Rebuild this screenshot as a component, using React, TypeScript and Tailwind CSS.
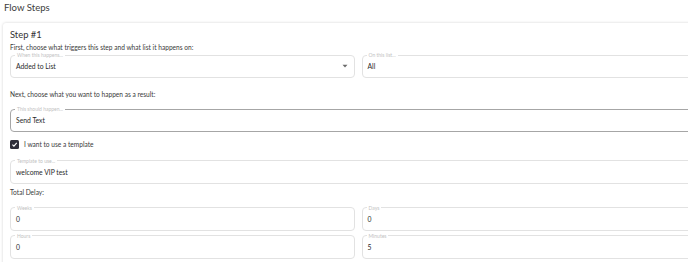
import React from "react";

interface FieldProps {
    label: string
    value: string
    select?: boolean
    active?: boolean
}

function Field(props: FieldProps) {
    return (
        <fieldset
            className={
                "flex-1 rounded-[4px] border px-[5px] pb-[3px] " +
                (props.active ? "border-[#a6a6a6]" : "border-[#e2e2e2]")
            }
        >
            <legend className="ml-[-1px] px-[2px] text-[5px] leading-[6px] text-[#c2c2c2]">
                {props.label}
            </legend>
            <div className="flex h-[16px] items-center justify-between text-[6.8px] text-[#2a2a2a]">
                <span>{props.value}</span>
                {props.select && (
                    <svg width="6" height="4" viewBox="0 0 6 4" className="mr-[1px]">
                        <path d="M0.5 0.8 L3 3.4 L5.5 0.8 Z" fill="#6b6b6b" />
                    </svg>
                )}
            </div>
        </fieldset>
    )
}

export default function App() {
    return (
        <div
            className="h-[262px] w-[688px] overflow-hidden bg-white"
            style={{ fontFamily: "Lato, 'Open Sans', sans-serif" }}
        >
            <h1 className="px-[4px] pt-[1px] text-[9.6px] leading-[13px] text-[#404040]">Flow Steps</h1>
            <div className="ml-[3px] mt-[9px] w-[720px] rounded-[3px] bg-white px-[7px] pt-[6px] shadow-[0_0_3px_rgba(0,0,0,0.18)]">
                <h2 className="text-[9.4px] leading-[12px] text-[#333]">Step #1</h2>
                <p className="mt-[2px] text-[6.6px] leading-[8px] text-[#3a3a3a]">
                    First, choose what triggers this step and what list it happens on:
                </p>
                <div className="mt-[1px] flex gap-[7px] pr-[10px]">
                    <Field label="When this happens..." value="Added to List" select />
                    <Field label="On this list..." value="All" />
                </div>
                <p className="mt-[12px] text-[6.6px] leading-[8px] text-[#3a3a3a]">
                    Next, choose what you want to happen as a result:
                </p>
                <div className="mt-[8px] flex pr-[10px]">
                    <Field label="This should happen..." value="Send Text" active />
                </div>
                <label className="mt-[8px] flex items-center gap-[5px] text-[6.6px] text-[#3a3a3a]">
                    <span className="flex h-[9px] w-[9px] items-center justify-center rounded-[1.5px] bg-[#2f2f3a]">
                        <svg width="7" height="7" viewBox="0 0 10 10">
                            <path d="M2 5.2 L4.2 7.3 L8.2 2.8" stroke="#fff" strokeWidth="1.6" fill="none" />
                        </svg>
                    </span>
                    I want to use a template
                </label>
                <div className="mt-[8px] flex pr-[10px]">
                    <Field label="Template to use..." value="welcome VIP test" />
                </div>
                <p className="mt-[4px] text-[6.6px] leading-[8px] text-[#3a3a3a]">Total Delay:</p>
                <div className="mt-[9px] flex gap-[7px] pr-[10px]">
                    <Field label="Weeks" value="0" />
                    <Field label="Days" value="0" />
                </div>
                <div className="mt-[2px] flex gap-[7px] pr-[10px] pb-[8px]">
                    <Field label="Hours" value="0" />
                    <Field label="Minutes" value="5" />
                </div>
            </div>
        </div>
    )
}
